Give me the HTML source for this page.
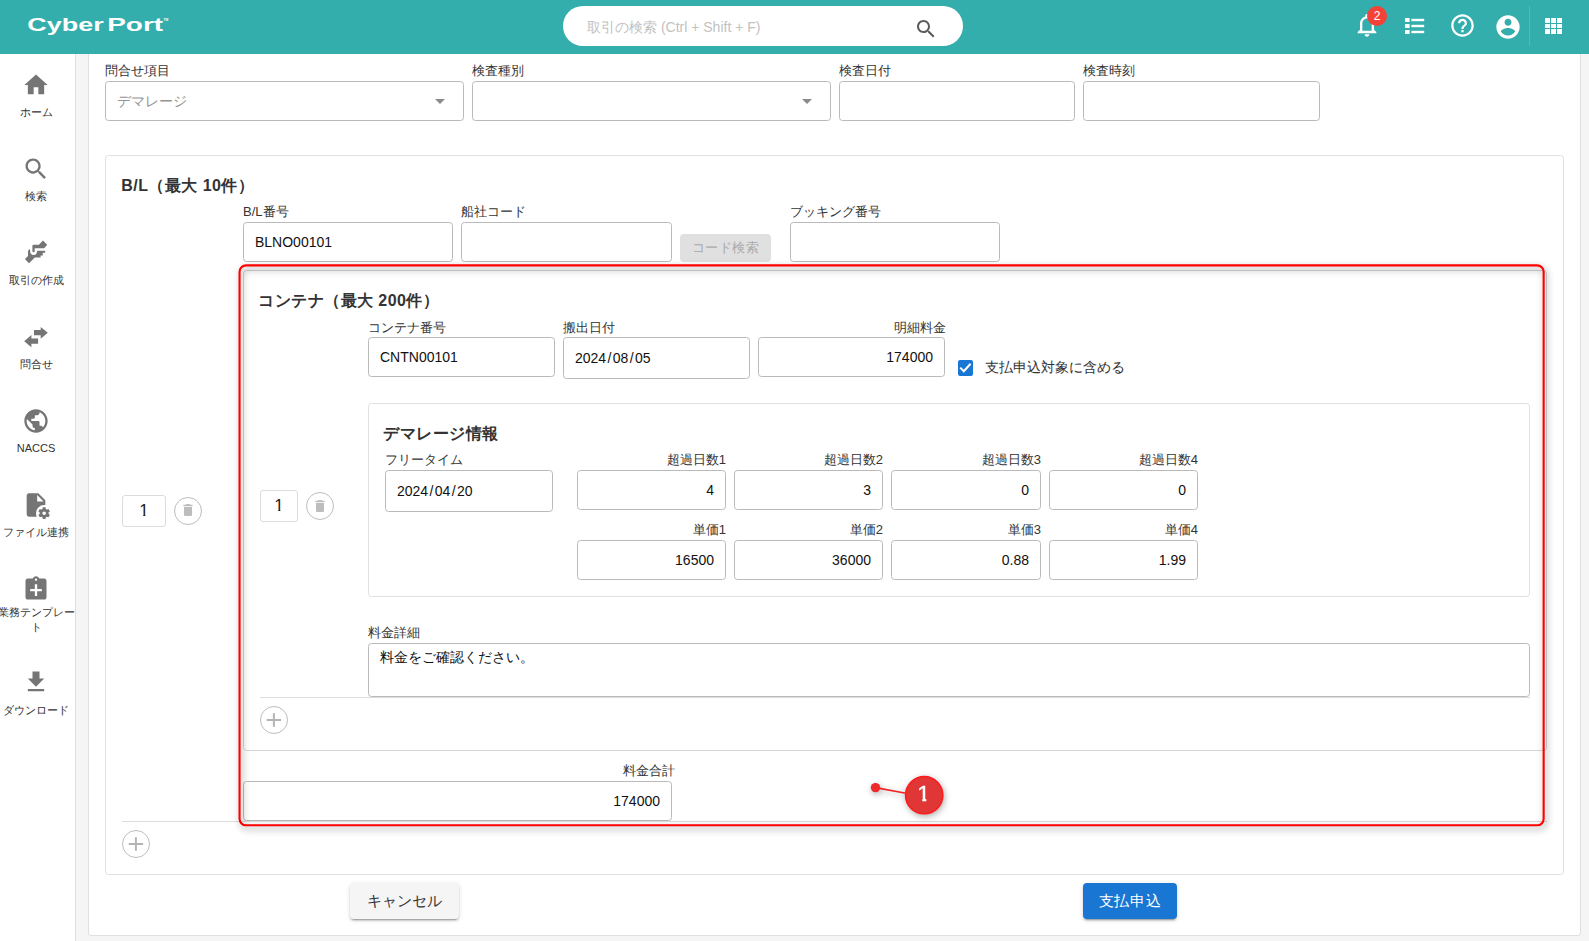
<!DOCTYPE html>
<html lang="ja">
<head>
<meta charset="utf-8">
<title>Cyber Port</title>
<style>
*{box-sizing:border-box;margin:0;padding:0}
html,body{width:1589px;height:941px;overflow:hidden;background:#f5f5f5;font-family:"Liberation Sans",sans-serif;color:#333}
.abs,.abs-all *{position:absolute}
#hdr{position:absolute;left:0;top:0;width:1589px;height:54px;background:#33aeac;z-index:5}
#side{position:absolute;left:0;top:54px;width:76px;height:887px;background:#fff;border-right:1px solid #dedede;overflow:hidden}
#main{position:absolute;left:88px;top:40px;width:1493px;height:896px;background:#fff;border:1px solid #dfdfdf;border-radius:3px}
.lbl{position:absolute;margin-top:1px;font-size:13px;line-height:16px;color:#333;white-space:nowrap}
.lbl.r{text-align:right}
.inp{position:absolute;height:40px;border:1px solid #bababa;border-radius:3.5px;background:#fff;font-size:14px;line-height:38px;padding:0 11px;color:#111;white-space:nowrap}
.inp.r{text-align:right}
.card{position:absolute;border:1px solid #e0e0e0;border-radius:3.5px;background:#fff}
.ttl{position:absolute;margin-top:1px;margin-left:-0.7px;letter-spacing:0.45px;font-size:16px;font-weight:bold;line-height:20px;color:#333;white-space:nowrap}
.nav{position:absolute;margin-top:1px;left:0;width:72px;text-align:center;font-size:11px;line-height:16px;color:#333}
#side svg{position:absolute;left:22px;width:28px;height:28px;fill:#757575}
.circ{position:absolute;width:28px;height:28px;border:1px solid #bdbdbd;border-radius:50%;background:#fff}
.num{position:absolute;border:1px solid #dcdcdc;border-radius:3px;background:#fff;font-size:17px;text-align:center;color:#222}
.inp i{font-style:normal;padding:0 1.4px}
.one{display:inline-block;line-height:30px;vertical-align:top;clip-path:polygon(0 0,100% 0,100% 17.9px,6.1px 17.9px,6.1px 24px,4px 24px,4px 17.9px,0 17.9px)}
.hr{position:absolute;height:1px;background:#dcdcdc}
</style>
</head>
<body>
<div id="main"></div>
<div id="content">
<div class="lbl" style="left:105px;top:62px">問合せ項目</div>
<div class="inp" style="left:105px;top:81px;width:359px;height:40px;"><span style="color:#949494">デマレージ</span></div>
<div style="position:absolute;left:435px;top:99px;width:0;height:0;border-left:5px solid transparent;border-right:5px solid transparent;border-top:5px solid #8a8a8a"></div>
<div class="lbl" style="left:472px;top:62px">検査種別</div>
<div class="inp" style="left:472px;top:81px;width:359px;height:40px;"></div>
<div style="position:absolute;left:802px;top:99px;width:0;height:0;border-left:5px solid transparent;border-right:5px solid transparent;border-top:5px solid #8a8a8a"></div>
<div class="lbl" style="left:839px;top:62px">検査日付</div>
<div class="inp" style="left:839px;top:81px;width:236px;height:40px;"></div>
<div class="lbl" style="left:1083px;top:62px">検査時刻</div>
<div class="inp" style="left:1083px;top:81px;width:237px;height:40px;"></div>
<div class="card" style="left:105px;top:155px;width:1459px;height:720px"></div>
<div class="ttl" style="left:122px;top:175px">B/L（最大 10件）</div>
<div class="lbl" style="left:243px;top:203px">B/L番号</div>
<div class="inp" style="left:243px;top:222px;width:210px;height:40px;">BLNO00101</div>
<div class="lbl" style="left:461px;top:203px">船社コード</div>
<div class="inp" style="left:461px;top:222px;width:211px;height:40px;"></div>
<div style="position:absolute;left:680px;top:234px;width:91px;height:28px;background:#e0e0e0;border-radius:4px;color:#a9a9a9;font-size:13px;line-height:27px;text-align:center;letter-spacing:0.5px">コード検索</div>
<div class="lbl" style="left:790px;top:203px">ブッキング番号</div>
<div class="inp" style="left:790px;top:222px;width:210px;height:40px;"></div>
<div class="num" style="left:122px;top:495px;width:44px;height:32px;line-height:30px"><span class="one">1</span></div>
<div class="circ" style="left:174px;top:496.500px"><svg viewBox="0 0 24 24" width="16" height="16" style="position:absolute;left:5px;top:4.600px" fill="#bdbdbd"><path d="M6 19c0 1.100.9 2 2 2h8c1.100 0 2-.9 2-2V7H6v12zM19 4h-3.500l-1-1h-5l-1 1H5v2h14V4z"/></svg></div>
<div class="hr" style="left:122px;top:821px;width:1425px"></div>
<div class="circ" style="left:122px;top:830px"><svg viewBox="0 0 26 26" width="26" height="26" style="position:absolute;left:0;top:0" fill="#b4b4b4"><path d="M5.700 12h14.400v2H5.700zM11.900 6.200h2v13.600h-2z"/></svg></div>
<div class="card" style="left:243px;top:270px;width:1304px;height:481px;border-color:#d4d4d4"></div>
<div class="ttl" style="left:259px;top:290px">コンテナ（最大 200件）</div>
<div class="lbl" style="left:368px;top:319px">コンテナ番号</div>
<div class="inp" style="left:368px;top:337px;width:187px;height:40px;">CNTN00101</div>
<div class="lbl" style="left:563px;top:319px">搬出日付</div>
<div class="inp" style="left:563px;top:337px;width:187px;height:41.5px;line-height:41px;">2024<i>/</i>08<i>/</i>05</div>
<div class="lbl r" style="left:746px;width:200px;top:319px">明細料金</div>
<div class="inp r" style="left:758px;top:337px;width:187px;height:40px;">174000</div>
<div style="position:absolute;left:957.500px;top:360px;width:15px;height:15.500px;border-radius:2px;background:#1976d2"><svg viewBox="0 0 15 15" width="15" height="15" style="position:absolute;left:0;top:0"><path d="M2.200 7.600l3.600 3.600 6.800-7.400" fill="none" stroke="#fff" stroke-width="2"/></svg></div>
<div style="position:absolute;left:985px;top:358px;font-size:14px;line-height:18px;color:#333;white-space:nowrap">支払申込対象に含める</div>
<div class="num" style="left:260px;top:490px;width:38px;height:32px;line-height:30px"><span class="one">1</span></div>
<div class="circ" style="left:306px;top:492px"><svg viewBox="0 0 24 24" width="16" height="16" style="position:absolute;left:5px;top:4.600px" fill="#bdbdbd"><path d="M6 19c0 1.100.9 2 2 2h8c1.100 0 2-.9 2-2V7H6v12zM19 4h-3.500l-1-1h-5l-1 1H5v2h14V4z"/></svg></div>
<div class="card" style="left:368px;top:403px;width:1162px;height:194px"></div>
<div class="ttl" style="left:384px;top:423px">デマレージ情報</div>
<div class="lbl" style="left:385px;top:451px">フリータイム</div>
<div class="inp" style="left:385px;top:470px;width:168px;height:41.5px;line-height:41px;">2024<i>/</i>04<i>/</i>20</div>
<div class="lbl r" style="left:526px;width:200px;top:451px">超過日数1</div>
<div class="inp r" style="left:577px;top:470px;width:149px;height:40px;">4</div>
<div class="lbl r" style="left:526px;width:200px;top:521px">単価1</div>
<div class="inp r" style="left:577px;top:540px;width:149px;height:40px;">16500</div>
<div class="lbl r" style="left:683px;width:200px;top:451px">超過日数2</div>
<div class="inp r" style="left:734px;top:470px;width:149px;height:40px;">3</div>
<div class="lbl r" style="left:683px;width:200px;top:521px">単価2</div>
<div class="inp r" style="left:734px;top:540px;width:149px;height:40px;">36000</div>
<div class="lbl r" style="left:841px;width:200px;top:451px">超過日数3</div>
<div class="inp r" style="left:891px;top:470px;width:150px;height:40px;">0</div>
<div class="lbl r" style="left:841px;width:200px;top:521px">単価3</div>
<div class="inp r" style="left:891px;top:540px;width:150px;height:40px;">0.88</div>
<div class="lbl r" style="left:998px;width:200px;top:451px">超過日数4</div>
<div class="inp r" style="left:1049px;top:470px;width:149px;height:40px;">0</div>
<div class="lbl r" style="left:998px;width:200px;top:521px">単価4</div>
<div class="inp r" style="left:1049px;top:540px;width:149px;height:40px;">1.99</div>
<div class="lbl" style="left:368px;top:624px">料金詳細</div>
<div class="inp" style="left:368px;top:643px;width:1162px;height:54px;line-height:18px;padding-top:4px;">料金をご確認ください。</div>
<div class="hr" style="left:260px;top:697px;width:1270px"></div>
<div class="circ" style="left:260px;top:706px"><svg viewBox="0 0 26 26" width="26" height="26" style="position:absolute;left:0;top:0" fill="#b4b4b4"><path d="M5.700 12h14.400v2H5.700zM11.900 6.200h2v13.600h-2z"/></svg></div>
<div class="lbl r" style="left:475px;width:200px;top:762px">料金合計</div>
<div class="inp r" style="left:243px;top:781px;width:429px;height:40px;">174000</div>
<div style="position:absolute;left:350px;top:883px;width:109px;height:36px;background:#f5f5f5;border-radius:4px;box-shadow:0 3px 1px -2px rgba(0,0,0,.2),0 2px 2px 0 rgba(0,0,0,.14),0 1px 5px 0 rgba(0,0,0,.12);font-size:15.2px;line-height:35px;text-align:center;color:#333">キャンセル</div>
<div style="position:absolute;left:1083px;top:883px;width:94px;height:36px;background:#1976d2;border-radius:4px;box-shadow:0 3px 1px -2px rgba(0,0,0,.2),0 2px 2px 0 rgba(0,0,0,.14),0 1px 5px 0 rgba(0,0,0,.12);font-size:15px;line-height:35px;text-align:center;color:#fff;letter-spacing:0.6px">支払申込</div>
<svg style="position:absolute;left:220px;top:250px;filter:drop-shadow(2px 3px 3.5px rgba(0,0,0,.45))" width="1345" height="600" viewBox="220 250 1345 600"><rect x="239.55" y="265.4" width="1304.1" height="559.9" rx="6.5" ry="6.5" fill="none" stroke="#ff0000" stroke-width="2.1"/></svg>
<svg style="position:absolute;left:850px;top:760px;filter:drop-shadow(1px 2px 3px rgba(0,0,0,.32))" width="120" height="70" viewBox="850 760 120 70"><line x1="875.500" y1="787.600" x2="906" y2="793.300" stroke="#f02222" stroke-width="1.600"/><circle cx="875.500" cy="787.600" r="4.700" fill="#f02a2a"/><circle cx="924.200" cy="795.200" r="18.600" fill="#e03636" stroke="#ff1c1c" stroke-width="1.600"/><clipPath id="c1"><path d="M915 780h11.200v18h-11.200z M922.300 797.500h4v6h-4z"/></clipPath><text x="923.600" y="801.200" text-anchor="middle" font-family="Liberation Sans, sans-serif" font-size="22.800" fill="#fff" stroke="#fff" stroke-width="0.4" clip-path="url(#c1)">1</text></svg>
</div>
<div id="side"><svg viewBox="0 0 24 24" style="top:16.5px"><path d="M10 20v-6h4v6h5v-8h3L12 3 2 12h3v8z"/></svg><div class="nav" style="top:49.0px">ホーム</div><svg viewBox="0 0 24 24" style="top:100.5px"><path d="M15.5 14h-.79l-.28-.27C15.41 12.59 16 11.11 16 9.5 16 5.91 13.09 3 9.5 3S3 5.91 3 9.5 5.91 16 9.5 16c1.61 0 3.09-.59 4.23-1.57l.27.28v.79l5 4.99L20.49 19l-4.99-5zm-6 0C7.01 14 5 11.99 5 9.500S7.010 5 9.500 5 14 7.010 14 9.500 11.990 14 9.500 14z"/></svg><div class="nav" style="top:133.0px">検索</div><svg viewBox="0 0 28 28" style="top:183.700px"><path d="M20.960 2.430L25.200 6.680 22.150 10.260H12.700V13.200a1.150 1.150 0 0 1-2.300 0V8Q10.400 6.850 11.600 6.850H16.900Z"/><path d="M15.350 12.800H23.200V14.700H20.800V17.400H18.600V19.400H12.800L7 25.200 2.930 21 6 17.900V12.800L7.900 10.900 8.200 13.500A3.400 3.400 0 0 0 15 13.500Z"/></svg><div class="nav" style="top:217.0px">取引の作成</div><svg viewBox="0 0 28 28" style="top:268.5px"><path d="M12 7H18.700V3.900L25.800 9.800 18.700 15.800V12.200H12Z"/><path d="M16.100 15.400H9.400V12.100L2.200 18.200 9.400 24.300V20.800H16.100Z"/></svg><div class="nav" style="top:301.0px">問合せ</div><svg viewBox="0 0 24 24" style="top:352.5px"><path d="M12 2C6.480 2 2 6.480 2 12s4.480 10 10 10 10-4.480 10-10S17.520 2 12 2zm-1 17.930c-3.950-.49-7-3.850-7-7.930 0-.62.080-1.210.210-1.790L9 15v1c0 1.100.9 2 2 2v1.930zm6.900-2.540c-.26-.81-1-1.390-1.900-1.390h-1v-3c0-.55-.45-1-1-1H8v-2h2c.55 0 1-.45 1-1V7h2c1.100 0 2-.9 2-2v-.41c2.930 1.190 5 4.060 5 7.410 0 2.080-.8 3.970-2.100 5.390z"/></svg><div class="nav" style="top:385.0px">NACCS</div><svg viewBox="0 0 24 24" style="top:436.5px"><path d="M6 2C4.890 2 4 2.890 4 4V20A2 2 0 0 0 6 22H12.680A7 7 0 0 1 12 19A7 7 0 0 1 19 12A7 7 0 0 1 20 12.080V8L14 2H6M13 3.500L18.500 9H13V3.500M18 14C17.870 14 17.760 14.090 17.740 14.210L17.550 15.530C17.250 15.660 16.960 15.820 16.700 16L15.460 15.500C15.350 15.500 15.220 15.500 15.150 15.630L14.150 17.360C14.090 17.470 14.110 17.600 14.210 17.680L15.270 18.500C15.250 18.670 15.240 18.830 15.240 19C15.240 19.170 15.250 19.330 15.270 19.500L14.210 20.320C14.120 20.400 14.090 20.530 14.150 20.640L15.150 22.370C15.210 22.500 15.340 22.500 15.460 22.500L16.700 22C16.960 22.180 17.240 22.350 17.550 22.470L17.740 23.790C17.760 23.910 17.860 24 18 24H20C20.110 24 20.220 23.910 20.240 23.790L20.430 22.470C20.730 22.340 21 22.180 21.270 22L22.500 22.500C22.630 22.500 22.760 22.500 22.830 22.370L23.830 20.640C23.890 20.530 23.860 20.400 23.770 20.320L22.700 19.500C22.720 19.330 22.740 19.170 22.740 19C22.740 18.830 22.730 18.670 22.700 18.500L23.760 17.680C23.850 17.600 23.880 17.470 23.820 17.360L22.820 15.630C22.760 15.500 22.630 15.500 22.500 15.500L21.270 16C21 15.820 20.730 15.650 20.420 15.530L20.230 14.210C20.220 14.090 20.110 14 20 14H18M19 17.500C19.830 17.500 20.500 18.170 20.500 19C20.500 19.830 19.830 20.500 19 20.500C18.160 20.500 17.500 19.830 17.500 19C17.500 18.170 18.170 17.500 19 17.500Z"/></svg><div class="nav" style="top:469.0px">ファイル連携</div><svg viewBox="0 0 24 24" style="top:520.5px"><path d="M19 3H14.820C14.400 1.840 13.300 1 12 1S9.600 1.840 9.180 3H5C3.900 3 3 3.900 3 5V19C3 20.100 3.900 21 5 21H19C20.100 21 21 20.100 21 19V5C21 3.900 20.100 3 19 3M12 3C12.550 3 13 3.450 13 4S12.550 5 12 5 11 4.550 11 4 11.450 3 12 3M17 14H13V18H11V14H7V12H11V8H13V12H17V14Z"/></svg><div class="nav" style="top:553.0px"><span style="display:block;line-height:14.5px;margin-top:-3px;white-space:nowrap;margin-left:-10px;margin-right:-10px">業務テンプレー<br>ト</span></div><svg viewBox="0 0 24 24" style="top:613.7px"><path d="M19 9h-4V3H9v6H5l7 7 7-7zM5 18v2h14v-2H5z"/></svg><div class="nav" style="top:646.6px">ダウンロード</div></div>
<div id="hdr">
<svg style="position:absolute;left:20px;top:8px" width="170" height="36" viewBox="20 8 170 36"><g fill="#fff" font-family="Liberation Sans, sans-serif" font-size="18.4" font-weight="bold"><text x="27.3" y="31" textLength="76.5" lengthAdjust="spacingAndGlyphs">Cyber</text><text x="107.2" y="31" textLength="56" lengthAdjust="spacingAndGlyphs">Port</text><text x="163.4" y="21" font-size="4.4" textLength="4.8" lengthAdjust="spacingAndGlyphs">TM</text></g></svg>
<div style="position:absolute;left:563px;top:6px;width:400px;height:40px;border-radius:20px;background:#fff"></div>
<div style="position:absolute;left:587px;top:17.700px;font-size:14px;line-height:18px;color:#c2c2c2;white-space:nowrap">取引の検索 (Ctrl + Shift + F)</div>
<svg style="position:absolute;left:914px;top:17px" width="24" height="24" viewBox="0 0 24 24" fill="#5c5c5c"><path d="M15.5 14h-.79l-.28-.27C15.41 12.59 16 11.11 16 9.5 16 5.91 13.09 3 9.5 3S3 5.91 3 9.5 5.91 16 9.5 16c1.61 0 3.09-.59 4.23-1.57l.27.28v.79l5 4.99L20.49 19l-4.99-5zm-6 0C7.01 14 5 11.99 5 9.5S7.01 5 9.5 5 14 7.01 14 9.5 11.99 14 9.5 14z"/></svg>
<svg style="position:absolute;left:1352.9px;top:11px" width="28" height="28" viewBox="0 0 24 24" fill="#fff"><path d="M12 22c1.1 0 2-.9 2-2h-4c0 1.1.9 2 2 2zm6-6v-5c0-3.07-1.63-5.64-4.5-6.32V4c0-.83-.67-1.5-1.5-1.5s-1.500.67-1.500 1.500v.68C7.640 5.360 6 7.920 6 11v5l-2 2v1h16v-1l-2-2zm-2 1H8v-6c0-2.480 1.510-4.500 4-4.500s4 2.020 4 4.500v6z"/></svg>
<div style="position:absolute;left:1367px;top:6px;width:20px;height:20px;border-radius:50%;background:#f44336;color:#fff;font-size:12px;line-height:20px;text-align:center">2</div>
<svg style="position:absolute;left:1405px;top:18px" width="20" height="16" viewBox="0 0 20 16" fill="#fff"><rect x="0" y="0" width="4.6" height="4"/><rect x="0" y="6" width="4.6" height="4"/><rect x="0" y="12" width="4.6" height="4"/><rect x="6.400" y="0.800" width="12.800" height="2.400"/><rect x="6.400" y="6.800" width="12.800" height="2.400"/><rect x="6.400" y="12.800" width="12.800" height="2.400"/></svg>
<svg style="position:absolute;left:1448.600px;top:12.300px" width="27" height="27" viewBox="0 0 24 24" fill="#fff"><path d="M11 18h2v-2h-2v2zm1-16C6.480 2 2 6.480 2 12s4.480 10 10 10 10-4.480 10-10S17.520 2 12 2zm0 18c-4.410 0-8-3.590-8-8s3.590-8 8-8 8 3.590 8 8-3.590 8-8 8zm0-14c-2.210 0-4 1.790-4 4h2c0-1.100.9-2 2-2s2 .9 2 2c0 2-3 1.750-3 5h2c0-2.250 3-2.500 3-5 0-2.210-1.790-4-4-4z"/></svg>
<svg style="position:absolute;left:1494px;top:12.800px" width="28" height="28" viewBox="0 0 24 24" fill="#fff"><path d="M12 2C6.480 2 2 6.480 2 12s4.480 10 10 10 10-4.480 10-10S17.520 2 12 2zm0 3c1.660 0 3 1.340 3 3s-1.340 3-3 3-3-1.340-3-3 1.340-3 3-3zm0 14.200c-2.500 0-4.710-1.280-6-3.220.03-1.990 4-3.080 6-3.080 1.990 0 5.970 1.090 6 3.080-1.290 1.940-3.500 3.220-6 3.220z"/></svg>
<div style="position:absolute;left:1529px;top:6px;width:1px;height:40px;background:#52bbb9"></div>
<svg style="position:absolute;left:1545px;top:18px" width="17" height="16" viewBox="0 0 17 16" fill="#fff" shape-rendering="crispEdges"><rect x="0" y="0.00" width="4.8" height="4.6"/><rect x="6" y="0.00" width="4.8" height="4.6"/><rect x="12" y="0.00" width="4.8" height="4.6"/><rect x="0" y="5.70" width="4.8" height="4.6"/><rect x="6" y="5.70" width="4.8" height="4.6"/><rect x="12" y="5.70" width="4.8" height="4.6"/><rect x="0" y="11.40" width="4.8" height="4.6"/><rect x="6" y="11.40" width="4.8" height="4.6"/><rect x="12" y="11.40" width="4.8" height="4.6"/></svg>
</div>
</body>
</html>
